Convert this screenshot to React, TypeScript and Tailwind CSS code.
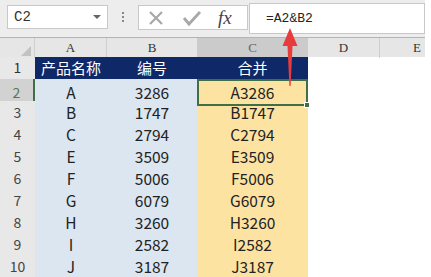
const rows = [
  { n: "A", code: "3286" },
  { n: "B", code: "1747" },
  { n: "C", code: "2794" },
  { n: "E", code: "3509" },
  { n: "F", code: "5006" },
  { n: "G", code: "6079" },
  { n: "H", code: "3260" },
  { n: "I", code: "2582" },
  { n: "J", code: "3187" },
];

const cols = "grid grid-cols-[35px_72px_90px_111px_72px_45px]";

export default function App() {
  return (
    <div className="relative w-[431px] h-[277px] overflow-hidden bg-white font-['Noto_Sans_CJK_SC',sans-serif]">
      <div className="w-[425px]">
        {/* Formula bar */}
        <div className="flex h-[37px] bg-[#ededed] pt-[4px]">
          <div className="ml-[7px] mt-[1px] w-[101px] h-[24px] bg-white border border-[#c8c8c8] flex items-center justify-between pl-[6px] pr-[6px]">
            <span className="font-['Liberation_Mono',monospace] text-[14px] text-[#333]">C2</span>
            <span className="w-0 h-0 border-l-[4px] border-r-[4px] border-t-[4px] border-l-transparent border-r-transparent border-t-[#666]" />
          </div>
          <div className="ml-[14px] mt-[8px] flex flex-col gap-[2px]">
            <span className="w-[2px] h-[2px] bg-[#888]" />
            <span className="w-[2px] h-[2px] bg-[#888]" />
            <span className="w-[2px] h-[2px] bg-[#888]" />
          </div>
          <div className="ml-[14px] mt-[1px] w-[110px] h-[25px] bg-white border border-[#c8c8c8] flex items-center">
            <svg width="18" height="18" viewBox="0 0 18 18" className="ml-[8px]">
              <path d="M3 3 L15 15 M15 3 L3 15" stroke="#a8a8a8" strokeWidth="2.2" fill="none" />
            </svg>
            <svg width="20" height="18" viewBox="0 0 20 18" className="ml-[17px]">
              <path d="M2 9 L7 15 L18 3" stroke="#a8a8a8" strokeWidth="2.8" fill="none" />
            </svg>
            <span className="ml-[16px] font-['Liberation_Serif',serif] italic text-[19px] text-[#444] leading-none">fx</span>
          </div>
          <div className="ml-[1px] -mt-[1px] flex-1 h-[31px] bg-white border border-[#c8c8c8] flex items-center pl-[16px]">
            <span className="font-['Liberation_Mono',monospace] text-[13px] text-[#222]">=A2&amp;B2</span>
          </div>
        </div>

        {/* Column headers */}
        <div className={`${cols} h-[20px] bg-[#e6e6e6] border-t border-[#b4b4b4] font-['Liberation_Serif',serif] text-[13px] text-[#333]`}>
          <div className="relative border-r border-[#cfcfcf]">
            <svg width="10" height="10" viewBox="0 0 10 10" className="absolute right-[3px] bottom-[2px]">
              <path d="M10 0 L10 10 L0 10 Z" fill="#c2c2c2" />
            </svg>
          </div>
          <div className="flex items-center justify-center border-r border-[#cfcfcf]">A</div>
          <div className="flex items-center justify-center">B</div>
          <div className="flex items-center justify-center bg-[#cbcbcb] text-[#666]">C</div>
          <div className="flex items-center justify-center border-r border-[#cfcfcf]">D</div>
          <div className="flex items-center justify-end pr-[4px]">E</div>
        </div>

        {/* Header row 1 */}
        <div className={`${cols} h-[22px] text-[15px]`}>
          <div className="flex items-center justify-center bg-[#e8e8e8] text-[#333] border-b border-[#d0d0d0] text-[14px]">1</div>
          <div className="flex items-center justify-center bg-[#0f2867] text-white">产品名称</div>
          <div className="flex items-center justify-center bg-[#0f2867] text-white">编号</div>
          <div className="flex items-center justify-center bg-[#0f2867] text-white">合并</div>
          <div />
          <div />
        </div>

        {/* Data rows */}
        {rows.map((r, i) => (
          <div key={i} className={`${cols} h-[22px] text-[15.5px] text-[#222]`}>
            <div
              className={
                i === 0
                  ? "flex items-center justify-center bg-[#d2d2d2] text-[#4a7a52] border-r-2 border-[#3f6e47] border-b border-b-[#c4c4c4] text-[14px]"
                  : "flex items-center justify-center bg-[#e8e8e8] text-[#444] border-b border-[#d0d0d0] text-[14px]"
              }
            >
              {i + 2}
            </div>
            <div className="flex items-center justify-center bg-[#dce6f1] border-b border-white">{r.n}</div>
            <div className="flex items-center justify-center bg-[#dce6f1] border-b border-white">{r.code}</div>
            <div
              className={
                i === 0
                  ? "relative flex items-center justify-center bg-[#fde3a2] border-2 border-[#3f6e47]"
                  : "flex items-center justify-center bg-[#fde3a2] border-b border-[#fff3d6]"
              }
            >
              {r.n}
              {r.code}
              {i === 0 && <span className="absolute -right-[4px] -bottom-[4px] w-[6px] h-[6px] bg-[#3f6e47] border border-white" />}
            </div>
            <div />
            <div />
          </div>
        ))}
      </div>

      {/* Red arrow */}
      <svg width="20" height="60" viewBox="0 0 20 60" className="absolute left-[280px] top-[28px]">
        <path d="M10 0 L17.5 18 L12.5 18 L10.6 58 L9.4 58 L7.5 18 L2.5 18 Z" fill="#e83b3b" />
      </svg>
    </div>
  );
}
